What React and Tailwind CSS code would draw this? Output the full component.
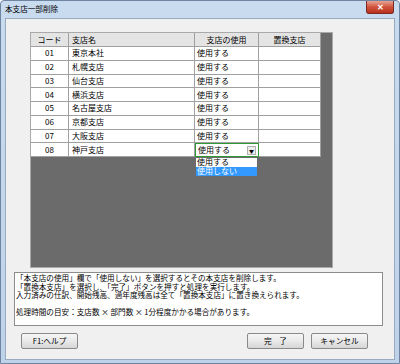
import React from 'react';

const rows = [
  ['01', '東京本社'],
  ['02', '札幌支店'],
  ['03', '仙台支店'],
  ['04', '横浜支店'],
  ['05', '名古屋支店'],
  ['06', '京都支店'],
  ['07', '大阪支店'],
  ['08', '神戸支店'],
];

const font = { fontFamily: '"Noto Sans CJK JP", "Noto Sans", sans-serif' };

const Button = ({ children, className = '' }) => (
  <button
    className={`h-[16px] rounded-[2px] border border-[#8a8a8a] bg-gradient-to-b from-[#f6f6f6] via-[#e9e9e9] to-[#d6d6d6] text-[7.7px] leading-none text-black ${className}`}
  >
    {children}
  </button>
);

export default function App() {
  return (
    <div
      style={font}
      className="w-[400px] h-[364px] flex flex-col bg-gradient-to-b from-[#c9dbef] to-[#bed2e9] border border-[#6f84a0] rounded-t-[4px] overflow-hidden"
    >
      {/* title bar */}
      <div className="h-[17px] shrink-0 flex items-start justify-between pl-[4px] pr-[5px]">
        <span className="text-[7.6px] leading-[16px] text-black">本支店一部削除</span>
        <div className="w-[28px] h-[13px] rounded-b-[3px] border border-[#7a2a20] border-t-0 bg-gradient-to-b from-[#e8a394] via-[#d0523c] to-[#b8311d] flex items-center justify-center text-white text-[8px] font-bold leading-none">
          ✕
        </div>
      </div>

      {/* client area */}
      <div className="mx-[4px] h-[342px] shrink-0 border border-[#9aabbf] bg-[#f0f0f0] flex flex-col">
        {/* grid */}
        <div className="ml-[24px] mt-[13px] w-[303px] h-[236px] bg-[#6b6b6b] border border-[#a9a9a9] relative">
          <div className="w-[290px] flex flex-col">
            <div className="h-[14px] flex bg-[#e4e4e4] text-[8px] leading-none text-black">
              <div className="w-[38px] border-r border-b border-[#a0a0a0] flex items-center justify-center">コード</div>
              <div className="w-[126px] border-r border-b border-[#a0a0a0] flex items-center pl-[3px]">支店名</div>
              <div className="w-[64px] border-r border-b border-[#a0a0a0] flex items-center justify-center">支店の使用</div>
              <div className="w-[62px] border-r border-b border-[#a0a0a0] flex items-center justify-center">置換支店</div>
            </div>
            {rows.map(([code, name], i) => (
              <div key={code} className="h-[13.75px] flex bg-white text-[8px] leading-none text-black">
                <div className="w-[38px] border-r border-b border-[#a0a0a0] flex items-center justify-center">{code}</div>
                <div className="w-[126px] border-r border-b border-[#a0a0a0] flex items-center pl-[3px]">{name}</div>
                {i === rows.length - 1 ? (
                  <div className="w-[64px] border-[1.5px] border-[#2f9a35] flex items-center justify-between pl-[2px] pr-[2px]">
                    <span>使用する</span>
                    <span className="w-[9px] h-[9px] border border-[#b0b0b0] bg-[#ececec] flex items-center justify-center text-[5px] leading-none">▼</span>
                  </div>
                ) : (
                  <div className="w-[64px] border-r border-b border-[#a0a0a0] flex items-center pl-[2px]">使用する</div>
                )}
                <div className="w-[62px] border-r border-b border-[#a0a0a0]"></div>
              </div>
            ))}
          </div>
          {/* dropdown list */}
          <div className="absolute left-[165px] top-[125px] w-[61px] flex flex-col text-[8px] leading-[8.5px]">
            <div className="h-[9px] bg-white text-black pl-[1px]">使用する</div>
            <div className="h-[8.5px] bg-[#3399ff] text-white pl-[1px]">使用しない</div>
          </div>
        </div>

        {/* info */}
        <div className="ml-[8px] mt-[4px] w-[369px] h-[54px] bg-white border border-[#8c8c8c] pl-[1px] pt-[1px] text-[7.6px] leading-[8.6px] text-black">
          <div>「本支店の使用」欄で「使用しない」を選択するとその本支店を削除します。</div>
          <div>「置換本支店」を選択し、「完了」ボタンを押すと処理を実行します。</div>
          <div>入力済みの仕訳、開始残高、過年度残高は全て「置換本支店」に置き換えられます。</div>
          <div className="h-[8.6px]"></div>
          <div>処理時間の目安：支店数 × 部門数 × 1分程度かかる場合があります。</div>
        </div>

        {/* buttons */}
        <div className="mt-[7px] flex items-center pl-[15px] pr-[26px]">
          <Button className="w-[57px]">F1:ヘルプ</Button>
          <div className="flex-1"></div>
          <Button className="w-[57px]">完　了</Button>
          <Button className="w-[57px] ml-[7px]">キャンセル</Button>
        </div>
      </div>
    </div>
  );
}
